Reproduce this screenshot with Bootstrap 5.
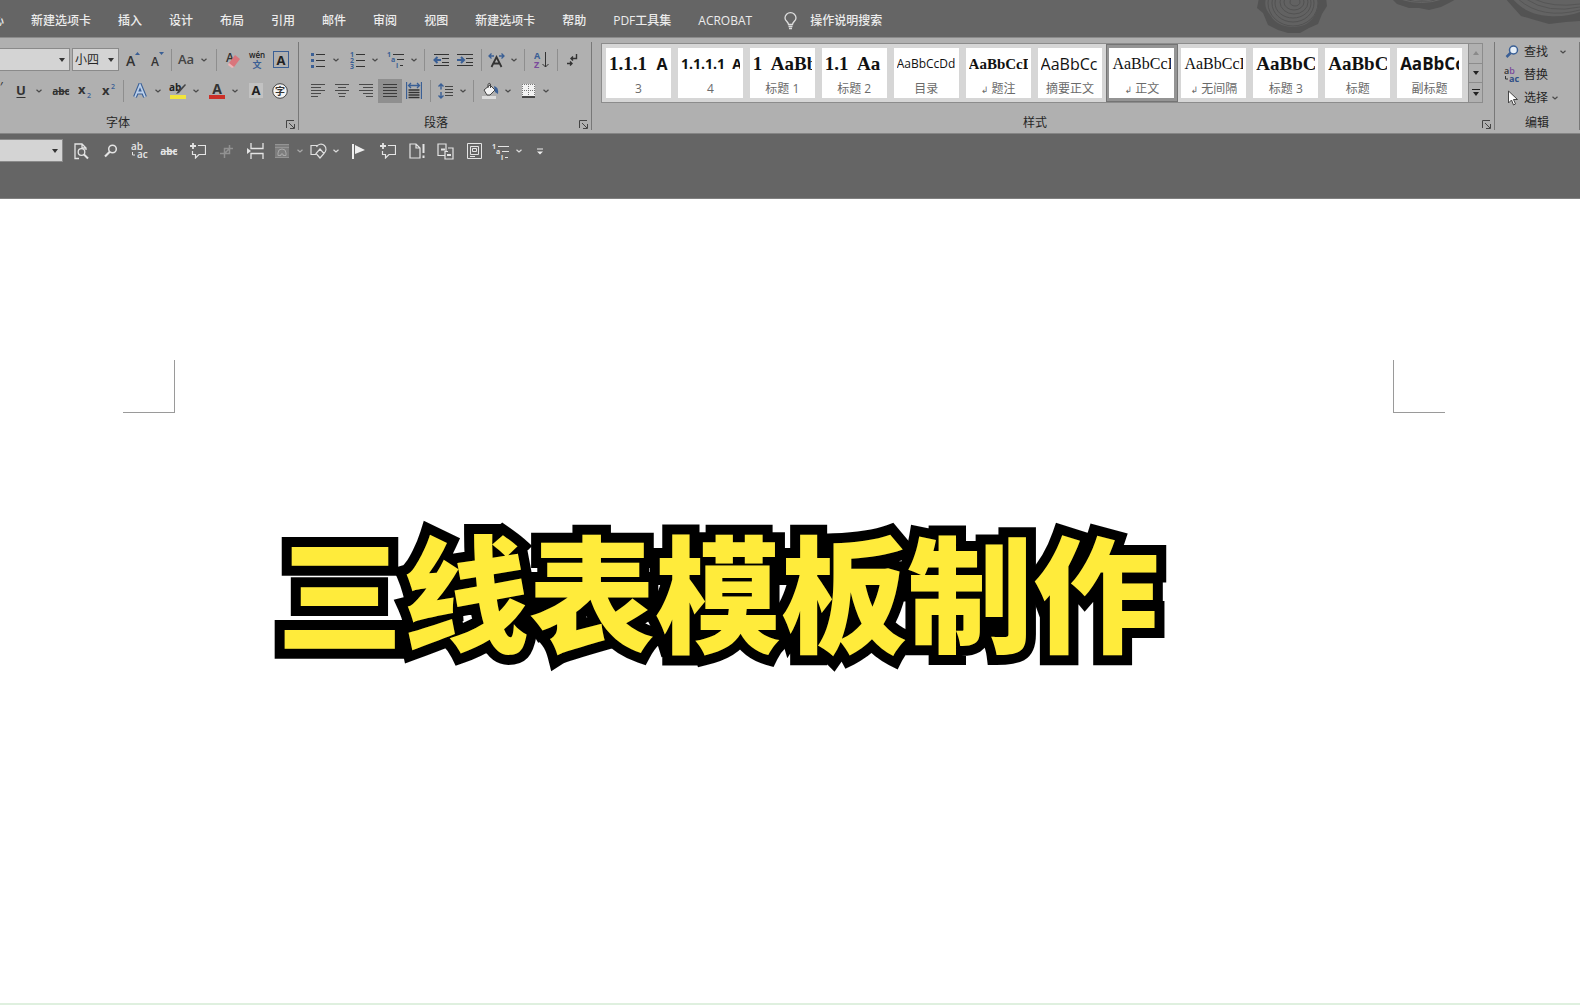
<!DOCTYPE html>
<html lang="zh-CN">
<head>
<meta charset="utf-8">
<meta name="viewport" content="width=device-width, initial-scale=1">
<title>三线表模板制作</title>
<link href="https://cdn.jsdelivr.net/npm/bootstrap@5.3.0/dist/css/bootstrap.min.css" rel="stylesheet">
<style>
:root{--chrome:#656565;--ribbon:#b0b0b0}
body{font-family:"Open Sans","Noto Sans CJK SC",sans-serif;font-size:12px;line-height:16px;color:#262626;background:#fff;overflow:hidden}
button,input,select{font:inherit;color:inherit}
svg{display:block;flex:none}
svg text{font-family:"Open Sans","Noto Sans CJK SC",sans-serif}
.tabbar{background:var(--chrome);height:37px;padding-top:5px}
.tabbar .nav{gap:27px;margin-left:-8px}
.tabbar .nav-link{padding:0;color:#ececec;font-weight:500;font-size:12px;line-height:32px;white-space:nowrap}
.tabbar .tell{height:32px;color:#ececec;font-weight:500;margin-left:32px;gap:13px}
.rings{margin-top:-5px}
.ribbon{background:var(--ribbon);height:97px;border-top:1px solid #8b8b8b;border-bottom:1px solid #858585}
.ribbon .c12,.ribbon .ebtn .chv{color:#4a4a4a}
.rgroup{position:relative;border-right:1px solid #787878;margin:4px 0 3px}
.grp-font{width:299px}
.grp-para{width:293px;padding-left:7px}
.grp-style{min-width:0;flex:1 1 0;padding:1px 11px 0 9px}
.grp-edit{width:85px;padding-left:9px}
.edits{margin-top:-2px}
.tools{height:31px}
.tools+.tools{margin-top:2px}
.glabel{position:absolute;bottom:-1px;left:0;right:0;text-align:center}
.grp-font .glabel{padding-right:62px}
.grp-para .glabel{padding-right:18px}
.grp-style .glabel{padding-right:16px}
.tool{border:0;background:none;padding:0;height:24px;display:flex;align-items:center;justify-content:center;flex:none}
.tool.launch{position:absolute;right:3px;bottom:1px;height:9px}
.i24{width:24px}.i29{width:29px}.c12{width:12px}
.g2{margin-left:2px}.g3{margin-left:3px}
.active-tool{background:#8f8f8f}
.vsep{width:5px;height:22px;flex:none;background:linear-gradient(#8e8e8e,#8e8e8e) center/1px 100% no-repeat}
.combo{appearance:none;border:1px solid #8a8a8a;border-radius:0;background:#d4d4d4 url("data:image/svg+xml,%3Csvg xmlns='http://www.w3.org/2000/svg' width='6' height='4'%3E%3Cpath d='M0 0h6L3 4z' fill='%23333'/%3E%3C/svg%3E") right 4px center no-repeat;height:23px;padding:0 2px;line-height:20px}
.combo-font{width:70px;border-left:0}.combo-size{width:47px}
.combo-qat{width:63px;border-left:0}
.italic-end{width:9px;margin-top:-8px}
.gallery{border:1px solid #8c8c8c;background:#d6d6d6;height:60px;padding-left:1px}
.tile{flex:1 1 0;min-width:0;border:solid transparent;border-width:4px 4px 4px 3px;padding:0;background:#fff;background-clip:padding-box;height:58px;overflow:hidden}
.tile.selected{border-color:#949494;outline:1px solid #747474;outline-offset:-1px}
.sample{display:block;white-space:pre;overflow:hidden;height:31px;line-height:32px;margin:0 3px;text-align:left;color:#111}
.tname{display:block;color:#6a6a6a;line-height:19px;white-space:nowrap}
.ret{font-family:"DejaVu Sans",sans-serif;font-size:9px}
.srf{font-family:"Liberation Serif",serif}
.z12{font-size:12px}.z14{font-size:14px}.z15{font-size:15px}.z16{font-size:16px}.z17{font-size:17px}.z19{font-size:19px}
.scroller{width:14px;border-left:1px solid #8c8c8c;background:var(--ribbon)}
.scroller button{border:0;border-bottom:1px solid #8c8c8c;background:none;padding:0;flex:1 1 0;display:flex;align-items:center;justify-content:center}
.scroller button:last-child{border-bottom:0}
.ebtn{border:0;background:none;padding:0;height:23px;display:flex;align-items:center;gap:4px}
.quick{background:var(--chrome);height:65px;padding-top:5px;border-bottom:1px solid #808080;color:#e4e4e4}
.quick .combo{color:#222}
.sheet{height:806px;border-bottom:2px solid #dff0df;padding:161px 135px 0 123px}
.crop{width:52px;height:53px;border-bottom:1px solid #9a9a9a}
.crop-l{border-right:1px solid #9a9a9a}.crop-r{border-left:1px solid #9a9a9a}
.headline{margin:85px 0 0 154px;font-family:"Noto Sans CJK SC",sans-serif;font-weight:900;font-size:126px;line-height:180px;color:#ffeb3b;-webkit-text-stroke:20px #000;paint-order:stroke fill;white-space:nowrap}
</style>
<script src="https://cdn.jsdelivr.net/npm/bootstrap@5.3.0/dist/js/bootstrap.bundle.min.js"></script>
</head>
<body>
<svg width="0" height="0" class="position-absolute" aria-hidden="true">
  <symbol id="chev" viewBox="0 0 6 4"><path d="M.5.7 3 3 5.500.7" fill="none" stroke="currentColor" stroke-width="1.200"/></symbol>
  <symbol id="launcher" viewBox="0 0 9 9"><path d="M.5 8V.5H8M3 3l5 5M8.500 4v4.500H4" fill="none" stroke="#444"/></symbol>
  <symbol id="comment" viewBox="0 0 16 16"><path d="M8 2.500h7.500v9H9L5.500 15v-3.500H2.500V8" fill="none" stroke="currentColor" stroke-width="1.200"/><path d="M3 0v6M0 3h6" stroke="currentColor" stroke-width="1.800"/></symbol>
</svg>

<header>
  <nav class="tabbar d-flex align-items-start" aria-label="功能区">
    <div class="nav flex-nowrap">
      <a class="nav-link" href="#">心</a><a class="nav-link" href="#">新建选项卡</a><a class="nav-link" href="#">插入</a><a class="nav-link" href="#">设计</a><a class="nav-link" href="#">布局</a><a class="nav-link" href="#">引用</a><a class="nav-link" href="#">邮件</a><a class="nav-link" href="#">审阅</a><a class="nav-link" href="#">视图</a><a class="nav-link" href="#">新建选项卡</a><a class="nav-link" href="#">帮助</a><a class="nav-link" href="#">PDF工具集</a><a class="nav-link" href="#">ACROBAT</a>
    </div>
    <button class="tool tell"><svg width="13" height="18" viewBox="0 0 13 18" fill="none" stroke="#ddd" stroke-width="1.300"><path d="M4.500 12.500c0-2.500-3.500-3.500-3.500-6.500a5.500 5.300 0 0 1 11 0c0 3-3.500 4-3.500 6.500zM4.500 14.500h4M5 16.500h3"/></svg>操作说明搜索</button>
    <svg class="rings ms-auto" width="330" height="36" viewBox="0 0 330 36">
      <path d="M9-2 7 8l6 5 5 12 10 5 10 3 12 0 9-5 9-4 4-10 5-8-1-9z" fill="#535353"/>
      <path d="M16-2c-2 8 0 12 5 18 4 7 11 10 20 11 10 0 16-2 21-8 5-6 7-12 6-21z" fill="#626262"/>
      <g fill="none" stroke="#525252"><ellipse cx="45" cy="2" rx="5" ry="4"/><ellipse cx="44" cy="2" rx="10" ry="8"/><ellipse cx="44" cy="2" rx="14" ry="12"/><ellipse cx="43" cy="3" rx="18" ry="15"/><ellipse cx="43" cy="3" rx="21" ry="19"/><ellipse cx="43" cy="3" rx="25" ry="23"/></g>
      <path d="M141-2l6 6 12 4 10 0 10 2 12-3 8-4 9-5z" fill="#535353"/>
      <path d="M150-1q22 7 42 0M158-1q14 4 28 0" fill="none" stroke="#666"/>
      <path d="M255-2l7 8 9 10 14 4 14 4 17-2 14-1V-2z" fill="#535353"/>
      <path d="M262-2c8 10 20 17 37 18 12 1 23-1 31-4V-2z" fill="#636363"/>
      <path d="M268-1q24 21 62 11M276-1q22 15 54 8M284-1q19 9 46 5" fill="none" stroke="#565656"/>
    </svg>
  </nav>

  <section class="ribbon d-flex">
    <div class="rgroup grp-font flex-shrink-0">
      <div class="tools d-flex align-items-center pt-1">
        <select class="combo combo-font" aria-label="字体名称"><option></option></select>
        <select class="combo combo-size g2" aria-label="字号"><option>小四</option></select>
        <button class="tool i24 g2" aria-label="增大字号"><svg width="16" height="18" viewBox="0 0 16 18"><text x="1" y="15" font-size="14" font-weight="600" fill="#333">A</text><path d="M10 4l2.500-3L15 4z" fill="#3a5f95"/></svg></button>
        <button class="tool i24" aria-label="减小字号"><svg width="16" height="18" viewBox="0 0 16 18"><text x="2" y="15" font-size="12" font-weight="600" fill="#333">A</text><path d="M10 1h5l-2.500 3z" fill="#3a5f95"/></svg></button>
        <span class="vsep"></span>
        <button class="tool i24" aria-label="更改大小写"><svg width="18" height="18" viewBox="0 0 18 18"><text x="1" y="13" font-size="13" font-weight="600" fill="#444">Aa</text></svg></button>
        <button class="tool c12" aria-label="更多"><svg width="6" height="4"><use href="#chev"/></svg></button>
        <span class="vsep ms-1"></span>
        <button class="tool i24 g2" aria-label="清除格式"><svg width="16" height="18" viewBox="0 0 16 18"><text x="1" y="11" font-size="12" font-weight="600" fill="#333">A</text><path d="M4 12l6-8 5 4-6 8-4-1z" fill="#d9757c"/><path d="M4 12l5 4-2 1-4-3z" fill="#f0b4b6"/></svg></button>
        <button class="tool i24" aria-label="拼音指南"><svg width="18" height="20" viewBox="0 0 18 20"><text x="9" y="8" font-size="8" font-weight="600" text-anchor="middle" fill="#222">wén</text><text x="9" y="18" font-size="9" font-weight="700" text-anchor="middle" fill="#3a5f95">文</text></svg></button>
        <button class="tool i24" aria-label="字符边框"><svg width="16" height="17" viewBox="0 0 16 17"><rect x=".5" y=".5" width="15" height="16" fill="none" stroke="#3a5f95"/><text x="8" y="13.500" font-size="13" font-weight="700" text-anchor="middle" fill="#222">A</text></svg></button>
      </div>
      <div class="tools d-flex align-items-center">
        <span class="italic-end">′</span>
        <button class="tool i24" aria-label="下划线"><svg width="12" height="16" viewBox="0 0 12 16"><text x="6" y="12" font-size="13" font-weight="700" text-anchor="middle" fill="#333">U</text><path d="M1.500 14.500h9" stroke="#333"/></svg></button>
        <button class="tool c12" aria-label="更多"><svg width="6" height="4"><use href="#chev"/></svg></button>
        <button class="tool i24 ms-1" aria-label="删除线"><svg width="18" height="14" viewBox="0 0 18 14"><text x="9" y="11" font-size="10" font-weight="700" text-anchor="middle" fill="#333">abc</text><path d="M1 7.500h16" stroke="#333"/></svg></button>
        <button class="tool i24" aria-label="下标"><svg width="16" height="16" viewBox="0 0 16 16"><text x="1" y="11" font-size="13" font-weight="700" fill="#333">x</text><text x="10" y="15" font-size="7" font-weight="600" fill="#3a5f95">2</text></svg></button>
        <button class="tool i24" aria-label="上标"><svg width="16" height="16" viewBox="0 0 16 16"><text x="1" y="12" font-size="13" font-weight="700" fill="#333">x</text><text x="10" y="6" font-size="7" font-weight="600" fill="#3a5f95">2</text></svg></button>
        <span class="vsep"></span>
        <button class="tool i24 g2" aria-label="文本效果"><svg width="16" height="16" viewBox="0 0 16 16"><path d="M3 14 8 2l5 12M5.500 9.500h5" fill="none" stroke="#3a5f95" stroke-width="4"/><path d="M3 14 8 2l5 12M5.500 9.500h5" fill="none" stroke="#bcd0ea" stroke-width="1.800"/></svg></button>
        <button class="tool c12" aria-label="更多"><svg width="6" height="4"><use href="#chev"/></svg></button>
        <button class="tool i24 g2" aria-label="突出显示"><svg width="18" height="18" viewBox="0 0 18 18"><text x="0" y="9" font-size="10" font-weight="700" fill="#222">ab</text><path d="M16 2 9 9l-2 3 3-1 7-8z" fill="#444"/><path d="M1 13h16v4H1z" fill="#f2e53c"/></svg></button>
        <button class="tool c12" aria-label="更多"><svg width="6" height="4"><use href="#chev"/></svg></button>
        <button class="tool i24 g3" aria-label="字体颜色"><svg width="18" height="18" viewBox="0 0 18 18"><text x="9" y="12" font-size="14" font-weight="700" text-anchor="middle" fill="#333">A</text><path d="M1 13h16v4H1z" fill="#cc2f27"/></svg></button>
        <button class="tool c12" aria-label="更多"><svg width="6" height="4"><use href="#chev"/></svg></button>
        <button class="tool i24 g3" aria-label="字符底纹"><svg width="14" height="15" viewBox="0 0 14 15"><path d="M0 0h14v15H0z" fill="#c2c2c2"/><text x="7" y="12" font-size="13" font-weight="700" text-anchor="middle" fill="#222">A</text></svg></button>
        <button class="tool i24" aria-label="带圈字符"><svg width="16" height="16" viewBox="0 0 16 16"><circle cx="8" cy="8" r="7.300" fill="#f4f4f4" stroke="#444"/><text x="8" y="11.500" font-size="10" font-weight="700" text-anchor="middle" fill="#333">字</text></svg></button>
      </div>
      <span class="glabel">字体</span>
      <button class="tool launch" aria-label="字体设置"><svg width="9" height="9"><use href="#launcher"/></svg></button>
    </div>

    <div class="rgroup grp-para flex-shrink-0">
      <div class="tools d-flex align-items-center pt-1">
        <button class="tool i24" aria-label="项目符号"><svg width="14" height="16" viewBox="0 0 14 16"><path d="M5 2.500h9M5 8.500h9M5 14.500h9" stroke="#333"/><path d="M0 1h3v3H0zM0 7h3v3H0zM0 13h3v3H0z" fill="#3a5f95"/></svg></button>
        <button class="tool c12" aria-label="更多"><svg width="6" height="4"><use href="#chev"/></svg></button>
        <button class="tool i24 g3" aria-label="编号"><svg width="15" height="18" viewBox="0 0 15 18"><path d="M6 3.500h9M6 9.500h9M6 15.500h9" stroke="#333"/><g font-size="7" font-weight="700" fill="#3a5f95"><text x="0" y="6">1</text><text x="0" y="12">2</text><text x="0" y="18">3</text></g></svg></button>
        <button class="tool c12" aria-label="更多"><svg width="6" height="4"><use href="#chev"/></svg></button>
        <button class="tool i24 g3" aria-label="多级列表"><svg width="18" height="17" viewBox="0 0 18 17"><path d="M6 3.500h11M10 8.500h7M13 14.500h3" stroke="#333"/><g fill="#3a5f95" font-size="7" font-weight="700"><text x="0" y="6">1</text><text x="4" y="11">a</text><text x="9" y="17">i</text></g></svg></button>
        <button class="tool c12" aria-label="更多"><svg width="6" height="4"><use href="#chev"/></svg></button>
        <span class="vsep g2"></span>
        <button class="tool i24 g2" aria-label="减少缩进"><svg width="16" height="14" viewBox="0 0 16 14"><path d="M1 1.500h15M9 5.500h7M9 9.500h7M1 12.500h15" stroke="#333"/><path d="M8 7H2M4.500 4 1.500 7l3 3" fill="none" stroke="#3a5f95" stroke-width="2"/></svg></button>
        <button class="tool i24" aria-label="增加缩进"><svg width="16" height="14" viewBox="0 0 16 14"><path d="M0 1.500h16M9 5.500h7M9 9.500h7M0 12.500h16" stroke="#333"/><path d="M0 7h6M4 4l3 3-3 3" fill="none" stroke="#3a5f95" stroke-width="2"/></svg></button>
        <span class="vsep g2"></span>
        <button class="tool i24" aria-label="中文版式"><svg width="17" height="16" viewBox="0 0 17 16"><path d="M3.500 15 8.500 5l5 10M5.500 11.500h6" fill="none" stroke="#333" stroke-width="1.800"/><path d="M1 4h5M3.500 1.500 1 4l2.500 2.500M16 4h-5M13.500 1.500 16 4l-2.500 2.500" fill="none" stroke="#3a5f95" stroke-width="1.300"/></svg></button>
        <button class="tool c12" aria-label="更多"><svg width="6" height="4"><use href="#chev"/></svg></button>
        <span class="vsep g2"></span>
        <button class="tool i24 g2" aria-label="排序"><svg width="15" height="18" viewBox="0 0 15 18"><text x="0" y="8" font-size="9" font-weight="700" fill="#3a5f95">A</text><text x="0" y="17" font-size="9" font-weight="700" fill="#7a4b9b">Z</text><path d="M11.500 1v15M8.500 13l3 3 3-3" fill="none" stroke="#333"/></svg></button>
        <span class="vsep g2"></span>
        <button class="tool i24" aria-label="编辑标记"><svg width="12" height="14" viewBox="0 0 12 14"><path d="M10.500 1v4.500H5M7 3.500l-2 2 2 2M1 10.500h5M4 8.500l2 2-2 2" fill="none" stroke="#333" stroke-width="1.400"/></svg></button>
      </div>
      <div class="tools d-flex align-items-center">
        <button class="tool i24" aria-label="左对齐"><svg width="14" height="13" viewBox="0 0 14 13"><path d="M0 .5h14M0 3.500h10M0 6.500h14M0 9.500h10M0 12.500h7" stroke="#4a4a4a"/></svg></button>
        <button class="tool i24" aria-label="居中"><svg width="14" height="13" viewBox="0 0 14 13"><path d="M0 .5h14M3 3.500h8M0 6.500h14M3 9.500h8M4 12.500h6" stroke="#4a4a4a"/></svg></button>
        <button class="tool i24" aria-label="右对齐"><svg width="14" height="13" viewBox="0 0 14 13"><path d="M0 .5h14M4 3.500h10M0 6.500h14M4 9.500h10M7 12.500h7" stroke="#4a4a4a"/></svg></button>
        <button class="tool i24 active-tool" aria-label="两端对齐"><svg width="14" height="13" viewBox="0 0 14 13"><path d="M0 .5h14M0 3.500h14M0 6.500h14M0 9.500h14M0 12.500h14" stroke="#3a3a3a"/></svg></button>
        <button class="tool i24" aria-label="分散对齐"><svg width="16" height="17" viewBox="0 0 16 17"><path d="M.5 0v17M15.500 0v17M3 3.500h10M5 1 2.500 3.500 5 6M11 1l2.500 2.500L11 6" fill="none" stroke="#3a5f95" stroke-width="1.300"/><path d="M2.500 8h11M2.500 10.500h11M2.500 13h11M2.500 15.500h11" stroke="#333" stroke-width="1.300"/></svg></button>
        <span class="vsep g2"></span>
        <button class="tool i24" aria-label="行距"><svg width="15" height="16" viewBox="0 0 15 16"><path d="M7 3.500h8M7 6.500h8M7 9.500h8M7 12.500h8" stroke="#444"/><path d="M3 1v5.500M.5 3.500 3 1l2.500 2.500M3 9v6M.5 12.500 3 15l2.500-2.500" fill="none" stroke="#3a5f95" stroke-width="1.400"/></svg></button>
        <button class="tool c12" aria-label="更多"><svg width="6" height="4"><use href="#chev"/></svg></button>
        <span class="vsep g2"></span>
        <button class="tool i24 g2" aria-label="底纹"><svg width="17" height="17" viewBox="0 0 17 17"><path d="M2 8l6-5 5 5-5 5H5z" fill="#f4f4f4" stroke="#444"/><path d="M6 6V2.500Q7 0 8.500 2v4" fill="none" stroke="#444"/><path d="M12 4q5 1 4 8l-3-2z" fill="#3a5f95"/><path d="M0 14h14v3H0z" fill="#ddd"/></svg></button>
        <button class="tool c12" aria-label="更多"><svg width="6" height="4"><use href="#chev"/></svg></button>
        <button class="tool i24 g2" aria-label="边框"><svg width="13" height="14" viewBox="0 0 13 14"><path d="M0 0h13v12H0z" fill="#f2f2f2"/><path d="M.5 0v12M12.500 0v12M6.500 0v12M0 .5h13M0 6.500h13" stroke="#777" stroke-dasharray="1 1"/><path d="M0 13h13" stroke="#222" stroke-width="1.500"/></svg></button>
        <button class="tool c12" aria-label="更多"><svg width="6" height="4"><use href="#chev"/></svg></button>
      </div>
      <span class="glabel">段落</span>
      <button class="tool launch" aria-label="段落设置"><svg width="9" height="9"><use href="#launcher"/></svg></button>
    </div>

    <div class="rgroup grp-style">
      <div class="gallery d-flex">
        <button class="tile"><span class="sample fw-bold"><span class="srf z19">1.1.1  </span><span class="z16">A</span></span><span class="tname">3</span></button>
        <button class="tile"><span class="sample fw-bold z14">1.1.1.1  A</span><span class="tname">4</span></button>
        <button class="tile"><span class="sample srf fw-bold z19">1  AaBb</span><span class="tname">标题 1</span></button>
        <button class="tile"><span class="sample srf fw-bold z19">1.1  Aa</span><span class="tname">标题 2</span></button>
        <button class="tile"><span class="sample z12">AaBbCcDd</span><span class="tname">目录</span></button>
        <button class="tile"><span class="sample srf fw-bold z15">AaBbCcD</span><span class="tname"><span class="ret">↲</span> 题注</span></button>
        <button class="tile"><span class="sample z16">AaBbCc</span><span class="tname">摘要正文</span></button>
        <button class="tile selected"><span class="sample srf z16">AaBbCcI</span><span class="tname"><span class="ret">↲</span> 正文</span></button>
        <button class="tile"><span class="sample srf z16">AaBbCcI</span><span class="tname"><span class="ret">↲</span> 无间隔</span></button>
        <button class="tile"><span class="sample srf fw-bold z19">AaBbC</span><span class="tname">标题 3</span></button>
        <button class="tile"><span class="sample srf fw-bold z19">AaBbC</span><span class="tname">标题</span></button>
        <button class="tile"><span class="sample fw-bold z17">AaBbCc</span><span class="tname">副标题</span></button>
        <div class="scroller d-flex flex-column flex-shrink-0 g2">
          <button aria-label="上一行"><svg width="6" height="4"><path d="M0 4h6L3 0z" fill="#8a8a8a"/></svg></button>
          <button aria-label="下一行"><svg width="6" height="4"><path d="M0 0h6L3 4z" fill="#222"/></svg></button>
          <button aria-label="展开样式"><svg width="8" height="7"><path d="M0 .5h8" stroke="#222"/><path d="M1 3h6L4 7z" fill="#222"/></svg></button>
        </div>
      </div>
      <span class="glabel">样式</span>
      <button class="tool launch" aria-label="样式窗格"><svg width="9" height="9"><use href="#launcher"/></svg></button>
    </div>

    <div class="rgroup grp-edit flex-shrink-0">
      <div class="edits">
        <button class="ebtn"><svg width="16" height="14" viewBox="0 0 16 14"><path d="M7 7.500 2.500 12" stroke="#3a5f95" stroke-width="2.500"/><circle cx="9.500" cy="5" r="4" fill="#e6eef6" stroke="#3a5f95" stroke-width="1.500"/></svg>查找<svg class="chv ms-2" width="6" height="4"><use href="#chev"/></svg></button>
        <button class="ebtn"><svg width="16" height="18" viewBox="0 0 16 18"><text x="0" y="8" font-size="9" font-weight="600" fill="#333">a<tspan fill="#7a4b9b">b</tspan></text><text x="5" y="16" font-size="9" font-weight="700" fill="#2f4f86">ac</text><path d="M1.500 10v3H4" fill="none" stroke="#333"/></svg>替换</button>
        <button class="ebtn"><svg width="16" height="16" viewBox="0 0 16 16"><path d="M4.500 1v12l3-3 2 5 2-1-2-4.500h4z" fill="#fff" stroke="#444"/></svg>选择<svg class="chv" width="6" height="4"><use href="#chev"/></svg></button>
      </div>
      <span class="glabel">编辑</span>
    </div>
  </section>

  <section class="quick d-flex align-items-start">
    <select class="combo combo-qat" aria-label="样式"><option></option></select>
    <div class="d-flex align-items-center ms-1">
      <button class="tool i29" aria-label="打印预览"><svg width="15" height="17" viewBox="0 0 15 17" fill="none" stroke="#e4e4e4" stroke-width="1.300"><path d="M5 15.500H1V1h7l4 4v2M8 1v4h4"/><circle cx="7.500" cy="9" r="3.300"/><path d="m10 11.500 4 4" stroke-width="2"/></svg></button>
      <button class="tool i29" aria-label="查找"><svg width="14" height="14" viewBox="0 0 14 14" fill="none" stroke="#e4e4e4"><circle cx="8.500" cy="5" r="3.800" stroke-width="1.500"/><path d="M6 7.500 1 12.500" stroke-width="2.200"/></svg></button>
      <button class="tool i29" aria-label="替换"><svg width="17" height="18" viewBox="0 0 17 18" fill="#e4e4e4"><text x="0" y="8" font-size="10" font-weight="600">ab</text><text x="6" y="16" font-size="10" font-weight="600">ac</text><path d="M1.500 10v3H4" fill="none" stroke="#e4e4e4"/></svg></button>
      <button class="tool i29" aria-label="删除线"><svg width="18" height="14" viewBox="0 0 18 14"><text x="9" y="11" font-size="10" font-weight="700" text-anchor="middle" fill="#e4e4e4">abc</text><path d="M1 7.500h16" stroke="#e4e4e4"/></svg></button>
      <button class="tool i29" aria-label="新建批注"><svg width="16" height="16"><use href="#comment"/></svg></button>
      <button class="tool i29" aria-label="裁剪"><svg width="14" height="14" viewBox="0 0 14 14" fill="none" stroke="#919191" stroke-width="1.500"><path d="M4.500 14V4.500H13M0 9.500h9.500V1M4.500 9.500l5-5"/></svg></button>
      <button class="tool i29" aria-label="分页符"><svg width="17" height="16" viewBox="0 0 17 16" fill="none" stroke="#e4e4e4" stroke-width="1.300"><path d="M4 0v5.500h12V0M4 16v-5.500h12V16"/><path d="M0 5l4 3-4 3z" fill="#e4e4e4" stroke="none"/></svg></button>
      <button class="tool i24" aria-label="环绕文字"><svg width="14" height="14" viewBox="0 0 14 14" fill="none" stroke="#949494"><path d="M0 0h14v14H0z" fill="#7d7d7d" stroke="none"/><path d="M0 .5h14M0 3.500h14M0 13.500h14"/><path d="M3 11.500V9a4 4 0 0 1 8 0v2.500h-3V10h-2v1.500z" stroke="#a8a8a8"/></svg></button>
      <button class="tool c12" aria-label="更多"><svg width="6" height="4" color="#aaa"><use href="#chev"/></svg></button>
      <button class="tool i24" aria-label="形状"><svg width="17" height="16" viewBox="0 0 17 16" fill="none" stroke="#e0e0e0" stroke-width="1.200"><path d="M6 11.500H1v-9h6"/><path d="M6.500 4a5 5 0 1 1 7 6.500M10 6l4 4.500-4 4.500-4-4.500z"/></svg></button>
      <button class="tool c12" aria-label="更多"><svg width="6" height="4" color="#ddd"><use href="#chev"/></svg></button>
      <button class="tool i29 g2" aria-label="标记"><svg width="13" height="15" viewBox="0 0 13 15" fill="#eee"><path d="M0 0h2v15H0zM3 1l10 5L3 10z"/></svg></button>
      <button class="tool i29" aria-label="新建批注"><svg width="16" height="16"><use href="#comment"/></svg></button>
      <button class="tool i29" aria-label="文档提醒"><svg width="16" height="16" viewBox="0 0 16 16" fill="none" stroke="#e4e4e4" stroke-width="1.200"><path d="M1 1h6l4 4v10H1zM7 1v4h4"/><path d="M14.500 1v9M14.500 12.500v2.500" stroke-width="2"/></svg></button>
      <button class="tool i29" aria-label="交叉引用"><svg width="17" height="17" viewBox="0 0 17 17" fill="none" stroke="#e4e4e4" stroke-width="1.200"><path d="M8 12.500H1V1h8v7M11 5h5v11H8V8.500h3"/><path d="M4 6.500h4M10 12h4" stroke-width="2"/></svg></button>
      <button class="tool i29" aria-label="文本框"><svg width="15" height="16" viewBox="0 0 15 16" fill="none" stroke="#e4e4e4"><path d="M.5.500h14v15H.5zM3.500 3.500h8v8h-8zM5.500 5.500h4v3h-4zM3 13.500h5"/></svg></button>
      <button class="tool i24" aria-label="多级列表"><svg width="18" height="17" viewBox="0 0 18 17"><path d="M6 3.500h11M10 8.500h7M13 14.500h3" stroke="#e4e4e4"/><g fill="#e4e4e4" font-size="7" font-weight="700"><text x="0" y="6">1</text><text x="4" y="11">a</text><text x="9" y="17">i</text></g></svg></button>
      <button class="tool c12" aria-label="更多"><svg width="6" height="4" color="#ddd"><use href="#chev"/></svg></button>
      <button class="tool i29" aria-label="自定义快速访问工具栏"><svg width="6" height="7"><path d="M0 1h6" stroke="#eee"/><path d="M0 3.500h6L3 6.500z" fill="#eee"/></svg></button>
    </div>
  </section>
</header>

<main class="sheet">
  <div class="d-flex justify-content-between"><div class="crop crop-l"></div><div class="crop crop-r"></div></div>
  <h1 class="headline">三线表模板制作</h1>
</main>
</body>
</html>
